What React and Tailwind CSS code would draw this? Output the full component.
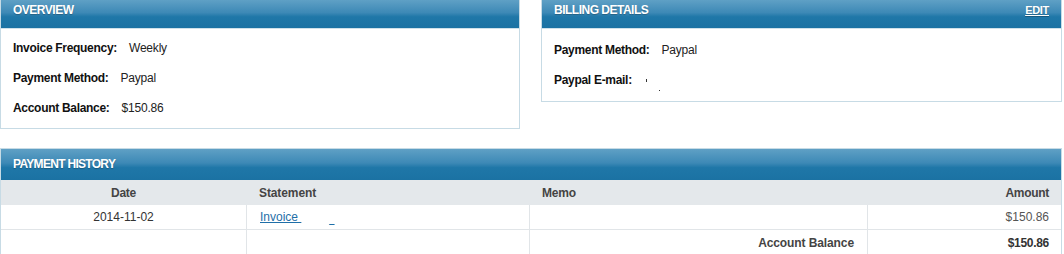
import React from "react";

const font = { fontFamily: '"Liberation Sans", Arial, sans-serif' };

function Header({ title, right, className = "" }) {
  return (
    <div
      className={`flex justify-between px-[12px] text-white font-bold text-[12px] tracking-[-0.5px] bg-[linear-gradient(to_bottom,#5fa0c5_0%,#3d89b6_45%,#1f77a8_60%,#1b72a3_100%)] [text-shadow:0_1px_1px_rgba(0,0,0,0.25)] ${className}`}
    >
      <span>{title}</span>
      {right}
    </div>
  );
}

function Row({ label, children }) {
  return (
    <div className="flex h-[30px] items-center text-[12px]">
      <span className="font-bold tracking-[-0.3px] text-[#111]">{label}</span>
      <span className="ml-[12px] text-[#222] text-[12px] tracking-[-0.2px]">{children}</span>
    </div>
  );
}

export default function App() {
  return (
    <div style={font} className="w-[1062px] bg-white text-[12px]">
      <div className="grid grid-cols-[520px_521px] gap-x-[21px] items-start">
        <div className="border-x border-b border-[#c7dbe5]">
          <Header title="OVERVIEW" className="h-[28px] pt-[3px] leading-[14px]" />
          <div className="h-px bg-[#cfe1ea]" />
          <div className="px-[12px] pt-[4px] pb-[5px]">
            <Row label="Invoice Frequency:">Weekly</Row>
            <Row label="Payment Method:">Paypal</Row>
            <Row label="Account Balance:">$150.86</Row>
          </div>
        </div>
        <div className="border-x border-b border-[#c7dbe5]">
          <Header
            title="BILLING DETAILS"
            className="h-[28px] pt-[3px] leading-[14px]"
            right={
              <a href="#" className="underline text-[11px] tracking-[-0.3px] text-white">
                EDIT
              </a>
            }
          />
          <div className="h-px bg-[#cfe1ea]" />
          <div className="px-[12px] pt-[6px] pb-[6px]">
            <Row label="Payment Method:">Paypal</Row>
            <Row label="Paypal E-mail:">
              <span className="inline-flex items-end h-[12px]">
                <span className="ml-[2px] w-px h-[3px] bg-[#333] self-start" />
                <span className="ml-[12px] w-px h-px bg-[#333]" />
              </span>
            </Row>
          </div>
        </div>
      </div>

      <div className="mt-[19px] border border-[#c7dbe5]">
        <Header title="PAYMENT HISTORY" className="h-[31px] items-center leading-[14px] pb-[2px] tracking-[-0.7px]" />
        <div className="grid grid-cols-[245px_283px_338px_1fr] text-[12px]">
          <div className="h-[25px] bg-[#e4e8eb] flex items-center justify-center font-bold tracking-[-0.3px] text-[#444]">Date</div>
          <div className="h-[25px] bg-[#e4e8eb] flex items-center pl-[13px] font-bold tracking-[-0.1px] text-[#444]">Statement</div>
          <div className="h-[25px] bg-[#e4e8eb] flex items-center pl-[13px] font-bold tracking-[-0.2px] text-[#444]">Memo</div>
          <div className="h-[25px] bg-[#e4e8eb] flex items-center justify-end pr-[12px] font-bold tracking-[-0.3px] text-[#444]">Amount</div>

          <div className="h-[25px] border-b border-[#e1e5e8] flex items-center justify-center text-[#333]">2014-11-02</div>
          <div className="h-[25px] border-b border-l border-[#e1e5e8] flex items-center pl-[13px]">
            <a href="#" className="underline text-[#1f6fa8]">Invoice&nbsp;</a>
            <a href="#" className="ml-[28px] underline text-[#1f6fa8] text-[9px] leading-none relative top-[3px]">_</a>
          </div>
          <div className="h-[25px] border-b border-l border-[#e1e5e8]" />
          <div className="h-[25px] border-b border-l border-[#e1e5e8] flex items-center justify-end pr-[12px] text-[#555]">$150.86</div>

          <div className="h-[25px]" />
          <div className="h-[25px] border-l border-[#e1e5e8]" />
          <div className="h-[25px] border-l border-[#e1e5e8] flex items-center justify-end pr-[13px] font-bold tracking-[-0.1px] text-[#444]">Account Balance</div>
          <div className="h-[25px] border-l border-[#e1e5e8] flex items-center justify-end pr-[12px] font-bold tracking-[-0.3px] text-[#333]">$150.86</div>
        </div>
      </div>
    </div>
  );
}
